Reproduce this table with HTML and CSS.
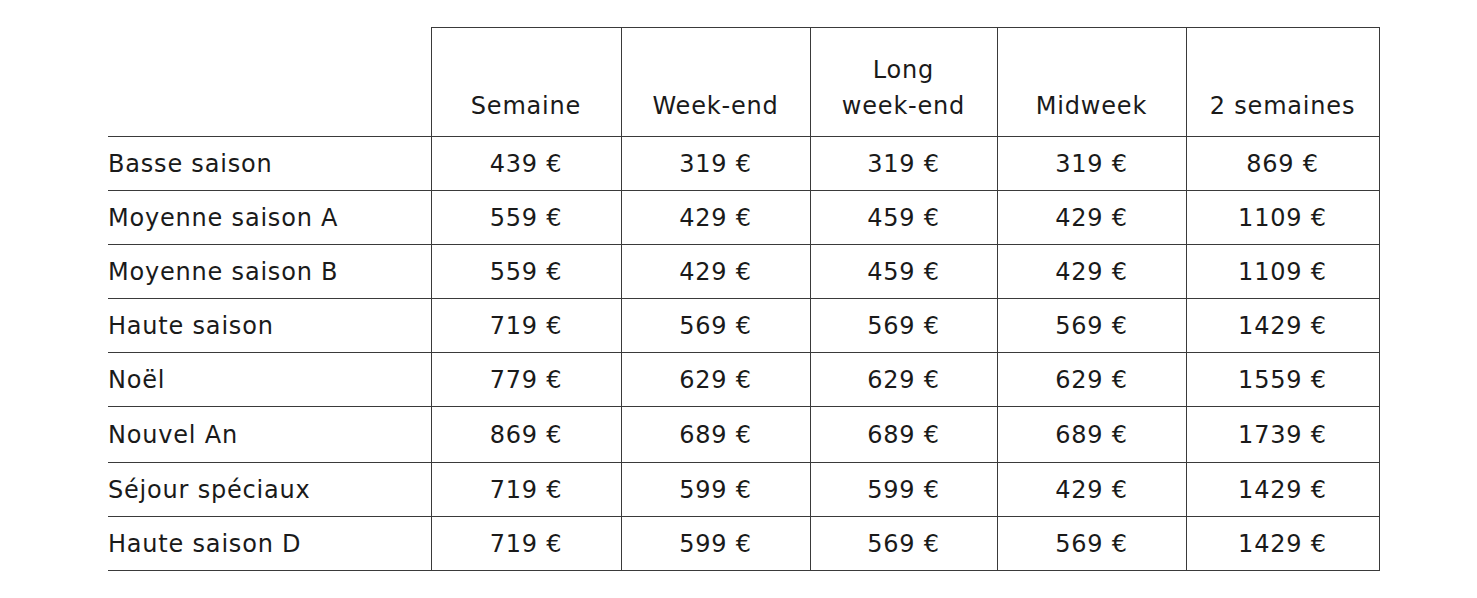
FILE: index.html
```html
<!DOCTYPE html>
<html lang="fr">
<head>
<meta charset="utf-8">
<title>Tarifs</title>
<link rel="stylesheet" href="styles.css">
</head>
<body>
<table class="rates">
  <colgroup>
    <col class="c-label">
    <col class="c-1"><col class="c-2"><col class="c-3"><col class="c-4"><col class="c-5">
  </colgroup>
  <thead>
    <tr>
      <th class="corner"></th>
      <th>Semaine</th>
      <th>Week-end</th>
      <th>Long<br>week-end</th>
      <th>Midweek</th>
      <th>2 semaines</th>
    </tr>
  </thead>
  <tbody>
    <tr><td class="label">Basse saison</td><td>439 €</td><td>319 €</td><td>319 €</td><td>319 €</td><td>869 €</td></tr>
    <tr><td class="label">Moyenne saison A</td><td>559 €</td><td>429 €</td><td>459 €</td><td>429 €</td><td>1109 €</td></tr>
    <tr><td class="label">Moyenne saison B</td><td>559 €</td><td>429 €</td><td>459 €</td><td>429 €</td><td>1109 €</td></tr>
    <tr><td class="label">Haute saison</td><td>719 €</td><td>569 €</td><td>569 €</td><td>569 €</td><td>1429 €</td></tr>
    <tr><td class="label">Noël</td><td>779 €</td><td>629 €</td><td>629 €</td><td>629 €</td><td>1559 €</td></tr>
    <tr class="tall"><td class="label">Nouvel An</td><td>869 €</td><td>689 €</td><td>689 €</td><td>689 €</td><td>1739 €</td></tr>
    <tr><td class="label">Séjour spéciaux</td><td>719 €</td><td>599 €</td><td>599 €</td><td>429 €</td><td>1429 €</td></tr>
    <tr><td class="label">Haute saison D</td><td>719 €</td><td>599 €</td><td>569 €</td><td>569 €</td><td>1429 €</td></tr>
  </tbody>
</table>
</body>
</html>
```
FILE: styles.css
```css
html, body {
  margin: 0;
  padding: 0;
  background: #ffffff;
}
body {
  padding: 27px 0 0 108px;
  font-family: "DejaVu Sans", "Liberation Sans", sans-serif;
  color: #1a1a1a;
}
.rates {
  border-collapse: collapse;
  table-layout: fixed;
  width: 1271px;
  font-size: 24px;
  letter-spacing: 0.8px;
  font-weight: normal;
}
.c-label { width: 323px; }
.c-1 { width: 190px; }
.c-2 { width: 189px; }
.c-3 { width: 187px; }
.c-4 { width: 189px; }
.c-5 { width: 193px; }
.rates th,
.rates td {
  border: 1px solid #3a3a3a;
  padding: 0;
  text-align: center;
  font-weight: normal;
}
.rates thead th {
  height: 109px;
  vertical-align: bottom;
  line-height: 36px;
  padding-bottom: 12px;
  box-sizing: border-box;
}
.rates thead th.corner {
  border-top: none;
  border-left: none;
}
.rates tbody td {
  height: 53px;
  vertical-align: middle;
  line-height: 26px;
}
.rates tbody tr.tall td {
  height: 55px;
}
.rates tbody td.label {
  text-align: left;
  border-left: none;
}
```
